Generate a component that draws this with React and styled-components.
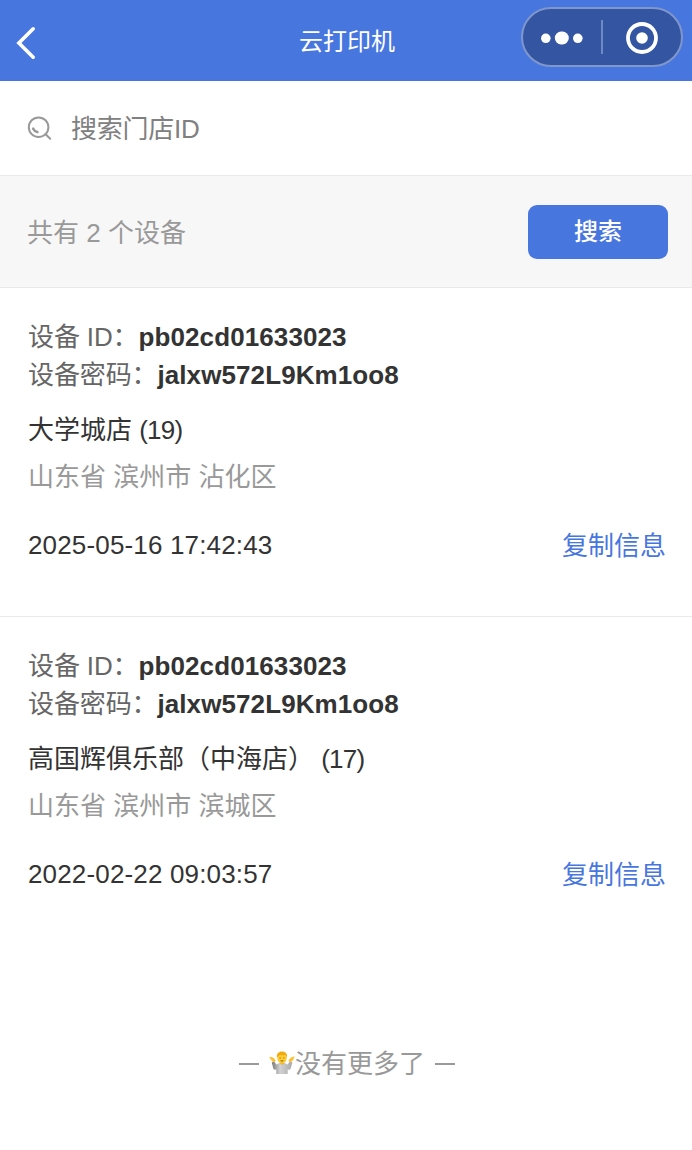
import React from 'react'
import styled, { createGlobalStyle } from 'styled-components'

const devices = [
  {
    id: 'pb02cd01633023',
    password: 'jalxw572L9Km1oo8',
    shop: '大学城店',
    count: 19,
    area: '山东省 滨州市 沾化区',
    time: '2025-05-16 17:42:43'
  },
  {
    id: 'pb02cd01633023',
    password: 'jalxw572L9Km1oo8',
    shop: '高国辉俱乐部（中海店）',
    count: 17,
    area: '山东省 滨州市 滨城区',
    time: '2022-02-22 09:03:57'
  }
]

const BackIcon = () => (
  <svg width='20' height='34' viewBox='0 0 20 34' fill='none'>
    <path d='M17.2 2.8 2.9 17 17.2 31.2' stroke='#fff' strokeWidth='3.6' strokeLinecap='round' strokeLinejoin='miter' />
  </svg>
)

const MoreIcon = () => (
  <svg width='42' height='14' viewBox='0 0 42 14' fill='#fff'>
    <circle cx='4.8' cy='7.3' r='4.8' />
    <rect x='13.8' y='0.6' width='14' height='12.8' rx='6.4' />
    <circle cx='36.8' cy='7.3' r='4.8' />
  </svg>
)

const CloseIcon = () => (
  <svg width='32' height='32' viewBox='0 0 32 32'>
    <circle cx='16' cy='16' r='14' fill='none' stroke='#fff' strokeWidth='3.8' />
    <circle cx='16' cy='16' r='5.8' fill='#fff' />
  </svg>
)

const SearchIcon = () => (
  <svg width='26' height='26' viewBox='0 0 26 26' fill='none' stroke='#999' strokeWidth='2' strokeLinecap='round'>
    <circle cx='11.6' cy='11.2' r='9.8' />
    <path d='m18.6 18.2 4.6 4.6' />
    <path d='M6.2 12.7c.9 1.9 2.2 2.9 4.1 3.4' strokeWidth='2.6' />
  </svg>
)

const ShrugIcon = () => (
  <svg width='26' height='24' viewBox='0 0 26 24'>
    <defs>
      <linearGradient id='shirt' x1='0' x2='1'>
        <stop offset='0' stopColor='#777' />
        <stop offset='.4' stopColor='#d2d2d2' />
        <stop offset='1' stopColor='#aaa' />
      </linearGradient>
    </defs>
    <path d='M2.8 11.5 5 10l2.4 3.6c1.2-1 2.6-1.6 4.1-1.6h3c1.5 0 2.9.6 4.1 1.6L21 10l2.4 1.5-1.7 6c-.5 1.3-2 1.6-3 .7V23H7.3v-4.8c-1 .9-2.4.6-3-.7Z' fill='url(#shirt)' />
    <path d='M.8 6.2 4.2 7l2 2.3-1 1.8-2.4-1.7ZM25.2 5.8 21.9 7l-2 2.2 1.2 1.9 2.3-1.7Z' fill='#fbc02d' stroke='#fbc02d' strokeWidth='.8' strokeLinejoin='round' />
    <path d='M11 10h4v2.5l-2 1.3-2-1.3Z' fill='#e9a91f' />
    <ellipse cx='13' cy='7' rx='4.7' ry='5.6' fill='#ffcb32' />
    <path d='M8 6.7C7.1 2.5 10 .3 13 .4c3.2 0 5.9 2.1 5 6.3l-1.3-2.6c-2 .3-4.3.1-6-.4Z' fill='#f0aa12' />
    <path d='M10.6 7h1M14.4 7h1M11.6 9.9h2.8' stroke='#76521a' strokeWidth='.9' />
  </svg>
)

const App = () => {
  return (
    <Page>
      <GlobalStyle />
      <Header>
        <BackButton><BackIcon /></BackButton>
        <Title>云打印机</Title>
        <Capsule>
          <CapsuleButton><MoreIcon /></CapsuleButton>
          <CapsuleDivider />
          <CapsuleButton><CloseIcon /></CapsuleButton>
        </Capsule>
      </Header>
      <SearchBar>
        <SearchIcon />
        <SearchInput placeholder='搜索门店ID' />
      </SearchBar>
      <Summary>
        <span>共有 2 个设备</span>
        <SearchButton>搜索</SearchButton>
      </Summary>
      {devices.map((device) => (
        <Device key={device.time}>
          <Field>设备 ID：<strong>{device.id}</strong></Field>
          <Field>设备密码：<strong>{device.password}</strong></Field>
          <Shop>{device.shop} <Count>({device.count})</Count></Shop>
          <Area>{device.area}</Area>
          <DeviceFooter>
            <Time>{device.time}</Time>
            <CopyButton>复制信息</CopyButton>
          </DeviceFooter>
        </Device>
      ))}
      <NoMore>
        <Dash />
        <NoMoreText><ShrugIcon /><span>没有更多了</span></NoMoreText>
        <Dash />
      </NoMore>
    </Page>
  )
}

const GlobalStyle = createGlobalStyle`
  * {
    box-sizing: border-box;
  }

  body {
    margin: 0;
    background: #fff;
  }

  body, button, input {
    font-family: 'Liberation Sans', 'Noto Sans CJK SC', sans-serif;
  }

  button {
    padding: 0;
    border: none;
    background: none;
  }

  svg {
    display: block;
    flex-shrink: 0;
  }
`

const Page = styled.div`
  min-height: 1150px;
  font-size: 26px;
  color: #333;
  background: #fff;
`

const Header = styled.header`
  display: grid;
  grid-template-columns: 1fr auto 1fr;
  align-items: center;
  height: 81px;
  padding: 0 9px 0 16px;
  background: #4876df;
`

const BackButton = styled.button`
  justify-self: start;
  margin-top: 4px;
`

const Title = styled.h1`
  margin: 0 5px 2px 0;
  color: #fff;
  font-size: 24px;
  font-weight: 400;
`

const Capsule = styled.div`
  display: flex;
  align-items: center;
  justify-self: end;
  width: 162px;
  height: 60px;
  margin-bottom: 7px;
  border: 2px solid #7f97cb;
  border-radius: 30px;
  background: #3455a1;
`

const CapsuleButton = styled.button`
  display: flex;
  flex: 1;
  justify-content: center;
  padding-top: 2px;
`

const CapsuleDivider = styled.div`
  width: 2px;
  height: 34px;
  background: #6f89c2;
`

const SearchBar = styled.div`
  display: flex;
  align-items: center;
  gap: 18px;
  height: 95px;
  padding: 1px 27px 0;
  border-bottom: 1px solid #e9e9e9;
`

const SearchInput = styled.input`
  flex: 1;
  padding: 1px 0 0;
  border: none;
  outline: none;
  font-size: 26px;
  letter-spacing: -0.25px;

  &::placeholder {
    color: #808080;
  }
`

const Summary = styled.div`
  display: flex;
  align-items: center;
  justify-content: space-between;
  height: 112px;
  padding: 0 24px 0 27px;
  border-bottom: 1px solid #e9e9e9;
  background: #f7f7f7;
  color: #999;

  span {
    padding-bottom: 2px;
  }
`

const SearchButton = styled.button`
  width: 140px;
  height: 54px;
  padding-bottom: 5px;
  border-radius: 9px;
  background: #4876df;
  color: #fff;
  font-size: 24px;
  font-weight: 500;
`

const Device = styled.section`
  height: 329px;
  padding: 30px 26px 0 28px;
  border-bottom: 1px solid #e9e9e9;

  & + & {
    border-bottom: none;
  }
`

const Field = styled.div`
  height: 37.5px;
  line-height: 38px;
  letter-spacing: -0.12px;
  color: #666;

  strong {
    color: #333;
    letter-spacing: 0.1px;
  }
`

const Shop = styled.div`
  margin-top: 17px;
  line-height: 40px;
`

const Count = styled.span`
  letter-spacing: -0.8px;
`

const Area = styled.div`
  margin-top: 7px;
  line-height: 40px;
  color: #999;
`

const DeviceFooter = styled.div`
  display: flex;
  align-items: center;
  justify-content: space-between;
  height: 40px;
  margin-top: 28px;
`

const Time = styled.span`
  letter-spacing: 0.16px;
`

const CopyButton = styled.button`
  padding-bottom: 4px;
  color: #4876df;
  font-size: 26px;
`

const NoMore = styled.div`
  display: flex;
  align-items: center;
  justify-content: center;
  gap: 10px;
  height: 40px;
  margin: 97px 0 0 2px;
  color: #999;
`

const NoMoreText = styled.div`
  display: flex;
  align-items: center;

  span {
    padding-bottom: 4px;
  }
`

const Dash = styled.span`
  width: 20px;
  height: 2px;
  margin-top: 2px;
  background: #999;
`

export default App
